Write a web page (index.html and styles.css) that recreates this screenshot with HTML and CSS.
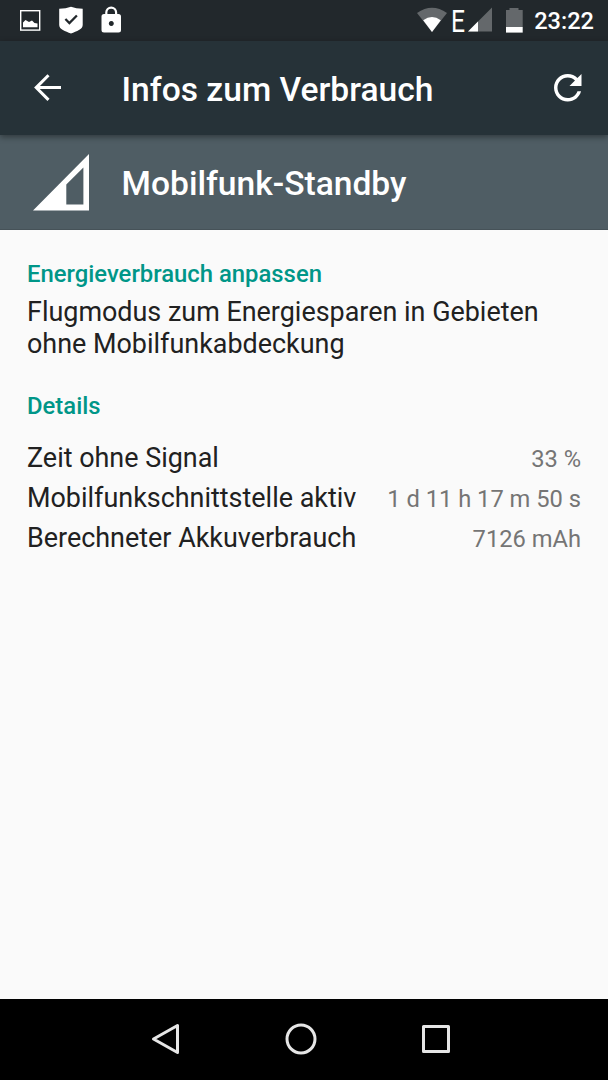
FILE: index.html
```
<!DOCTYPE html>
<html lang="de">

<head>
    <meta charset="UTF-8">
    <meta name="viewport" content="width=device-width, initial-scale=1.0">
    <title>Infos zum Verbrauch</title>
    <link rel="stylesheet" href="styles.css">
</head>

<body>
    <div class="screen">
        <div class="status-bar">
            <div class="status-left">
                <svg width="22" height="42" viewBox="20 0 22 42">
                    <rect x="20.7" y="10.7" width="19" height="19.4" fill="none" stroke="#fff" stroke-width="1.4" />
                    <path d="M23 27.300V22.500l2.500-2.500 3.500 2 3-1.500 2.500 2.500 3 .5v3.800z" fill="#fff" />
                </svg>
                <svg width="24" height="42" viewBox="59 0 24 42">
                    <path d="M59.2 8.800Q66 8.600 71 6.800q5 1.800 11.700 2V25c0 4.500-6 6-11.700 8.600C65.200 31 59.200 29.500 59.200 25z" fill="#fff" />
                    <path d="M65.400 19l4 4 7.500-7.500" fill="none" stroke="#22282c" stroke-width="2.300" />
                </svg>
                <svg width="20" height="42" viewBox="101 0 20 42">
                    <path d="M106.300 15v-2.500a4.900 4.900 0 0 1 9.800 0V15" fill="none" stroke="#fff" stroke-width="2.200" />
                    <path fill-rule="evenodd" d="M104 14h14.500q2.500 0 2.500 2.500V30q0 2.500-2.500 2.500H104q-2.500 0-2.500-2.500V16.500q0-2.500 2.500-2.500zm7.300 7a2.500 2.500 0 1 0 .01 0z" fill="#fff" />
                </svg>
            </div>
            <div class="status-right">
                <svg width="30" height="42" viewBox="417 0 30 42">
                    <path d="M417 13q15-10.500 30 0L432 32z" fill="#64686b" />
                    <path d="M423.200 20.200q8.800-6.400 17.600 0L432 32z" fill="#fff" />
                </svg>
                <svg class="network" width="40" height="42" viewBox="452 0 40 42">
                    <text class="network-type" x="451" y="32" textLength="14" lengthAdjust="spacingAndGlyphs">E</text>
                    <path d="M492 7.500v24h-24z" fill="#64686b" />
                    <path d="M478 21.500v10h-10z" fill="#fff" />
                </svg>
                <svg class="battery" width="17" height="42" viewBox="506 0 17 42">
                    <path d="M506 10h3.500V8h9v2h4.200v17.300H506z" fill="#64686b" />
                    <path d="M506 27h16.700v5.600H506z" fill="#fff" />
                </svg>
                <span class="clock">23:22</span>
            </div>
        </div>

        <div class="toolbar">
            <svg class="back" width="28" height="28" viewBox="0 0 28 28">
                <path d="M27 13.600H2.500M14.500 1.300L2.200 13.600l12.300 12.300" fill="none" stroke="#fff" stroke-width="3" />
            </svg>
            <h1 class="title">Infos zum Verbrauch</h1>
            <svg class="refresh" width="27.5" height="27.5" viewBox="4 4 16 16">
                <path d="M17.650 6.350C16.200 4.900 14.210 4 12 4c-4.420 0-7.990 3.580-7.990 8s3.570 8 7.990 8c3.730 0 6.840-2.550 7.730-6h-2.080c-.82 2.330-3.040 4-5.650 4-3.310 0-6-2.690-6-6s2.690-6 6-6c1.660 0 3.140.69 4.220 1.780L13 11h7V4l-2.350 2.350z" fill="#fff" />
            </svg>
        </div>

        <div class="app-header">
            <svg class="signal" width="57" height="58" viewBox="0 0 57 58">
                <path fill-rule="evenodd" d="M56 1v56.500H0zM50.400 14.500L33.300 31.500v20h17.100z" fill="#fff" />
            </svg>
            <h2 class="title">Mobilfunk-Standby</h2>
        </div>

        <div class="content">
            <h3 class="section-title">Energieverbrauch anpassen</h3>
            <p class="tip">Flugmodus zum Energiesparen in Gebieten ohne Mobilfunkabdeckung</p>
            <h3 class="section-title details-title">Details</h3>
            <div class="row">
                <span>Zeit ohne Signal</span>
                <span class="value">33 %</span>
            </div>
            <div class="row">
                <span>Mobilfunkschnittstelle aktiv</span>
                <span class="value">1 d 11 h 17 m 50 s</span>
            </div>
            <div class="row">
                <span>Berechneter Akkuverbrauch</span>
                <span class="value">7126 mAh</span>
            </div>
        </div>

        <div class="nav-bar">
            <svg width="32" height="32" viewBox="0 0 32 32">
                <path d="M27.500 2.500v27L3.500 16z" />
            </svg>
            <svg width="32" height="32" viewBox="0 0 32 32">
                <circle cx="16" cy="16" r="14" />
            </svg>
            <svg width="32" height="32" viewBox="0 0 32 32">
                <rect x="3.500" y="3.500" width="25" height="25" />
            </svg>
        </div>
    </div>
</body>

</html>
```
FILE: styles.css
```
* {
    box-sizing: border-box;
}

body {
    margin: 0;
    background: #fafafa;
    font-family: Roboto, "Liberation Sans", sans-serif;
}

h1, h2, h3, p {
    margin: 0;
}

svg {
    display: block;
    flex-shrink: 0;
}

.screen {
    display: flex;
    flex-direction: column;
    width: 608px;
    height: 1080px;
    overflow: hidden;
}

.status-bar {
    display: flex;
    justify-content: space-between;
    height: 41px;
    padding: 0 14px 0 20px;
    background: #22282c;
    color: #fff;
}

.status-left {
    display: flex;
    gap: 17px;
}

.status-left svg + svg + svg {
    margin-left: 1px;
}

.status-right {
    display: flex;
}

.network {
    margin-left: 5px;
}

.network-type {
    font-size: 31px;
    fill: #fff;
}

.battery {
    margin-left: 14px;
}

.clock {
    margin-left: 11px;
    font-size: 23.6px;
    font-weight: 500;
    line-height: 42px;
}

.toolbar {
    position: relative;
    display: flex;
    align-items: center;
    height: 94px;
    padding: 0 26.5px 0 34px;
    background: #263238;
    box-shadow: 0 2px 6px rgba(0, 0, 0, 0.4);
}

.title {
    padding-top: 3px;
    color: #fff;
    font-size: 33.6px;
    font-weight: 500;
    line-height: 40px;
}

.back {
    margin-right: 59.6px;
}

.refresh {
    margin-left: auto;
}

.app-header {
    display: flex;
    align-items: center;
    height: 94.5px;
    padding-left: 33px;
    background: #4f5d64;
    border-bottom: 1px solid #465258;
}

.app-header .title {
    padding-top: 5px;
}

.signal {
    margin-right: 31.6px;
}

.content {
    flex: 1;
    padding: 30px 27px 0;
    color: #212121;
}

.section-title {
    color: #009688;
    font-size: 23.85px;
    font-weight: 500;
    line-height: 28px;
}

.tip {
    padding-top: 8px;
    font-size: 26.93px;
    line-height: 32px;
}

.details-title {
    margin-top: 32.5px;
    margin-bottom: 17.5px;
}

.row {
    display: flex;
    justify-content: space-between;
    align-items: baseline;
    height: 40px;
    font-size: 26.93px;
    line-height: 40px;
}

.value {
    color: #757575;
    font-size: 23.7px;
}

.nav-bar {
    display: flex;
    justify-content: center;
    gap: 103px;
    height: 81px;
    padding-right: 7px;
    padding-bottom: 1px;
    align-items: center;
    background: #000;
}

.nav-bar svg {
    fill: none;
    stroke: #e6e6e6;
    stroke-width: 3;
    stroke-linejoin: round;
}
```
